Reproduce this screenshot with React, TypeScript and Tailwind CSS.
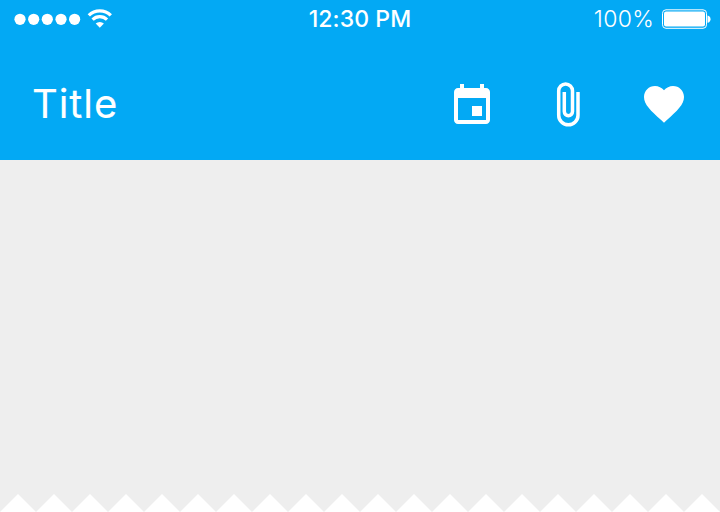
import React from 'react';

const teeth = Array.from({ length: 20 }, (_, i) => `L${i * 36 + 18} 0 L${i * 36 + 36} 18`).join(' ');

function StatusBar() {
  return (
    <div className="grid h-10 grid-cols-3 items-start text-2xl leading-10">
      <div className="flex h-10 items-center pl-3.5">
        <svg width="100" height="40" viewBox="14 0 100 40" fill="white">
          <circle cx="20" cy="19.3" r="5.6" />
          <circle cx="33.7" cy="19.3" r="5.6" />
          <circle cx="47.3" cy="19.3" r="5.6" />
          <circle cx="61" cy="19.3" r="5.6" />
          <circle cx="74.6" cy="19.3" r="5.6" />
          <path d="M88.8 15.4A15.6 15.6 0 0 1 110.8 15.4" fill="none" stroke="white" strokeWidth="3.3" />
          <path d="M92.6 19.7A10.2 10.2 0 0 1 107 19.7" fill="none" stroke="white" strokeWidth="3.2" />
          <path d="M95.7 23.6A5.9 5.9 0 0 1 103.9 23.6L99.8 27.8Z" />
        </svg>
      </div>
      <div className="h-10 text-center font-['Inter',sans-serif] text-[23px] font-medium leading-[38px] tracking-[0.1px]">12:30 PM</div>
      <div className="flex h-10 justify-end pr-[9px]">
        <span className="mr-[7px] font-['Inter',sans-serif] text-[23px] font-light leading-[38px] tracking-[0.3px]">100%</span>
        <svg width="50" height="40" viewBox="661 0 50 40" fill="white">
          <rect x="662.5" y="9.8" width="44" height="18.5" rx="3.5" fill="none" stroke="white" />
          <rect x="664" y="11.5" width="41" height="15" rx="2" />
          <path d="M707.5 15.6C711.5 16 711.5 22.4 707.5 22.8Z" />
        </svg>
      </div>
    </div>
  );
}

export default function App() {
  return (
    <div className="flex h-[512px] w-[720px] flex-col overflow-hidden bg-[#eeeeee]">
      <header className="h-40 bg-[#03a9f4] text-white">
        <StatusBar />
        <div className="flex h-30 items-center justify-between pr-8 pl-8">
          <h1 className="mt-2 font-['Inter',sans-serif] text-[40px] leading-none tracking-[0.9px] [-webkit-text-stroke:0.1px_white]">Title</h1>
          <div className="mt-2 flex gap-12">
            <svg width="48" height="48" viewBox="0 -1 24 24" fill="white">
              <path d="M17 12h-5v5h5v-5zM16 1v2H8V1H6v2H5c-1.11 0-1.99.9-1.99 2L3 19c0 1.1.89 2 2 2h14c1.1 0 2-.9 2-2V5c0-1.1-.9-2-2-2h-1V1h-2zm3 18H5V8h14v11z" />
            </svg>
            <svg width="48" height="48" viewBox="544 80 48 48" fill="none" stroke="white" strokeWidth="3.5">
              <path d="M578 92V115.2A9.65 9.65 0 0 1 558.7 115.2V90.8A6.9 6.9 0 0 1 572.5 90.8V111.6A4.1 4.1 0 0 1 564.3 111.6V92" />
            </svg>
            <svg width="48" height="48" viewBox="0 0 24 24" fill="white">
              <path d="M12 21.35l-1.45-1.32C5.4 15.36 2 12.28 2 8.5 2 5.42 4.42 3 7.5 3c1.74 0 3.41.81 4.5 2.09C13.09 3.81 14.76 3 16.5 3 19.58 3 22 5.42 22 8.5c0 3.78-3.4 6.86-8.55 11.54L12 21.35z" />
            </svg>
          </div>
        </div>
      </header>
      <main className="flex flex-1 items-end">
        <svg width="720" height="18" viewBox="0 0 720 18" fill="white">
          <path d={`M0 18 ${teeth} Z`} />
        </svg>
      </main>
    </div>
  );
}
